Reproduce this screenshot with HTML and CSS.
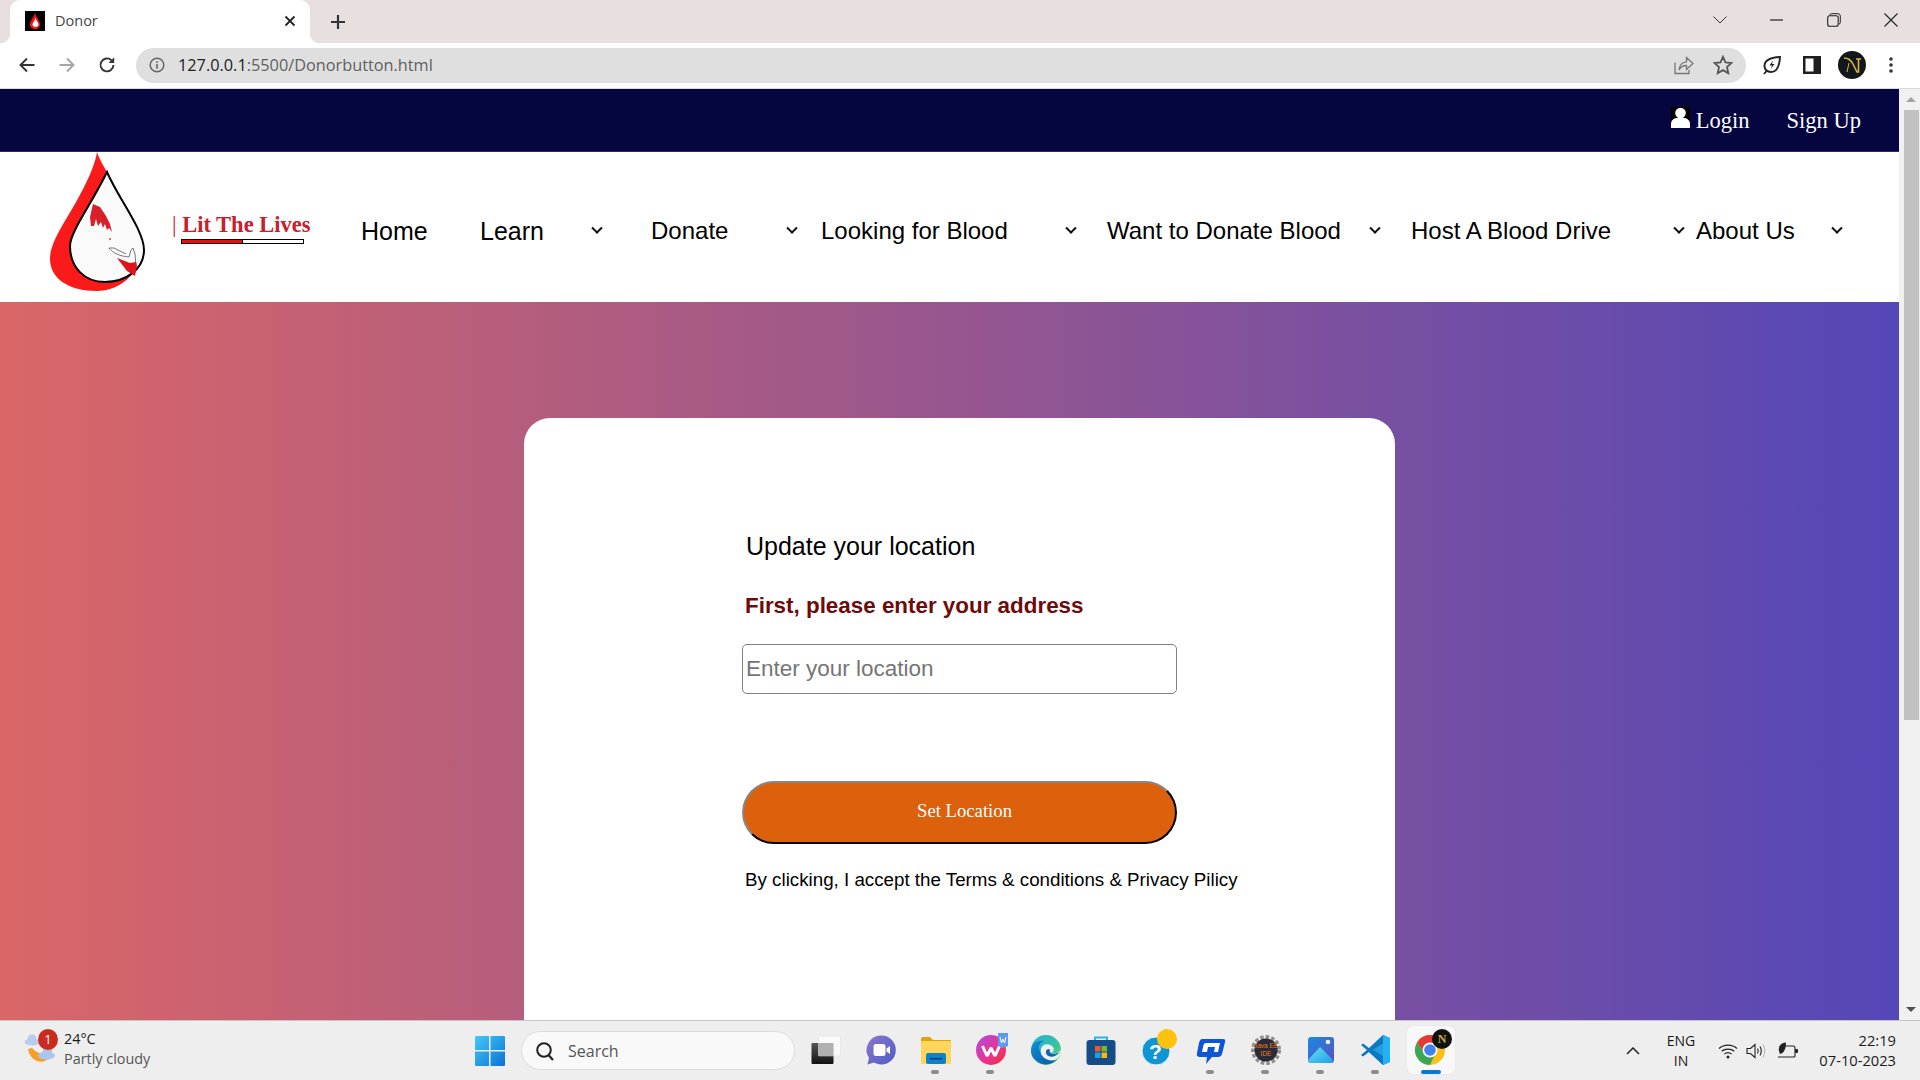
FILE: index.html
```html
<!DOCTYPE html>
<html lang="en">
<head>
<meta charset="utf-8">
<title>Donor</title>
<link rel="stylesheet" href="styles.css">
</head>
<body>
<div class="tabstrip">
  <div class="tab">
    <svg class="favicon" viewBox="0 0 20 20"><rect width="20" height="20" fill="#000"/><path d="M10 2C9 6 5 10 5 13.500C5 16.500 7.500 18 10 18C13 18 15 16 15 13.500C15 10 11 6 10 2Z" fill="#f11"/><path d="M10.500 7C10 10 7.500 11.500 7.500 13.500C7.500 15 9 16 10.500 16C12.500 16 13.500 15 13.500 13.500C13.500 11.500 11.500 10 10.500 7Z" fill="#fff"/></svg>
    <span class="tab-title">Donor</span>
    <svg class="tab-close" viewBox="0 0 12 12"><path d="M1.500 1.500L10.500 10.500M10.500 1.500L1.500 10.500" stroke="#222" stroke-width="1.800"/></svg>
  </div>
  <svg class="newtab" viewBox="0 0 16 16"><path d="M8 1V15M1 8H15" stroke="#333" stroke-width="2.200"/></svg>
  <div class="win-controls">
    <svg class="wc wc-chev" viewBox="0 0 14 8"><path d="M.5 .5L7 7L13.500 .5" fill="none" stroke="#333" stroke-width="1"/></svg>
    <svg class="wc wc-min" viewBox="0 0 14 14"><path d="M0 7H13" stroke="#222" stroke-width="1.200"/></svg>
    <svg class="wc wc-max" viewBox="0 0 14 14"><path d="M3 2.500V2Q3 .7 4.500 .7H11Q13.300 .7 13.300 3V9.500Q13.300 11 12 11" fill="none" stroke="#222"/><rect x=".7" y="2.700" width="10.500" height="10.500" rx="2" fill="none" stroke="#222" stroke-width="1.100"/></svg>
    <svg class="wc wc-close" viewBox="0 0 14 14"><path d="M.5 .5L13.500 13.500M13.500 .5L.5 13.500" stroke="#222" stroke-width="1.100"/></svg>
  </div>
</div>

<div class="toolbar">
  <svg class="tb-ico" viewBox="0 0 18 18"><path d="M16.500 9H2.500M9 2.500L2.500 9L9 15.500" fill="none" stroke="#333" stroke-width="1.900"/></svg>
  <svg class="tb-ico" viewBox="0 0 18 18"><path d="M1.500 9H15.500M9 2.500L15.500 9L9 15.500" fill="none" stroke="#a5a5a5" stroke-width="1.900"/></svg>
  <svg class="tb-ico" viewBox="0 0 18 18"><path d="M15.500 9A6.500 6.500 0 1 1 13.500 4.200" fill="none" stroke="#333" stroke-width="1.900"/><path d="M16.200 1.200V7H10.500Z" fill="#333"/></svg>
  <div class="omnibox">
    <svg class="info" viewBox="0 0 16 16"><circle cx="8" cy="8" r="6.800" fill="none" stroke="#666" stroke-width="1.500"/><rect x="7.200" y="7" width="1.600" height="4.800" fill="#666"/><rect x="7.200" y="4.200" width="1.600" height="1.700" fill="#666"/></svg>
    <span class="url"><span class="url-host">127.0.0.1</span>:5500/Donorbutton.html</span>
    <svg class="omni-ico" viewBox="0 0 20 20"><path d="M1 7.500V18.500H15V15" fill="none" stroke="#777" stroke-width="1.300"/><path d="M5 15C5.500 10 8.500 7 12.500 6.800V2.500L19 8.500L12.500 14.500V10.500C9.500 10.300 7 11.500 5 15Z" fill="none" stroke="#777" stroke-width="1.300"/></svg>
    <svg class="omni-ico star" viewBox="0 0 20 20"><path d="M10 1.800L12.500 7.400L18.500 8L14 12.100L15.300 18.200L10 15.100L4.700 18.200L6 12.100L1.500 8L7.500 7.400Z" fill="none" stroke="#555" stroke-width="1.800"/></svg>
  </div>
  <svg class="ext leaf" viewBox="0 0 20 20"><path d="M18 2C17.500 10 16 17 9 17C5 17 2.500 14.500 2.500 11C2.500 6 8 2.500 18 2Z" fill="none" stroke="#222" stroke-width="1.900"/><path d="M2 19L5 15.500" stroke="#222" stroke-width="1.900"/><path d="M11 5.500L7.500 10.500H10L8.500 14L12.500 9H10Z" fill="#222"/></svg>
  <svg class="ext side" viewBox="0 0 18 18"><rect width="18" height="18" fill="#1f1f1f"/><rect x="2.500" y="2.500" width="8" height="13" fill="#fff"/></svg>
  <svg class="ext avatar" viewBox="0 0 28 28"><circle cx="14" cy="14" r="14" fill="#12171c"/><path d="M6 7C11 7 13 9 15 13L19 21H20.500V8M18 8H23" fill="none" stroke="#d8b53c" stroke-width="1.600"/><path d="M9 21L11 12" stroke="#d8b53c"/></svg>
  <svg class="ext dots" viewBox="0 0 4 18"><circle cx="2" cy="3" r="1.800" fill="#333"/><circle cx="2" cy="9" r="1.800" fill="#333"/><circle cx="2" cy="15" r="1.800" fill="#333"/></svg>
</div>

<div class="viewport">
  <main class="page">
    <header class="topbar">
      <a class="top-link login">
        <svg class="user" viewBox="0 0 19 21"><rect width="19" height="21" fill="#000"/><circle cx="9.500" cy="6" r="5.300" fill="#fff"/><path d="M0 21V17C0 12.500 4 10.500 9.500 10.500C15 10.500 19 12.500 19 17V21Z" fill="#fff"/></svg>
        <span>Login</span>
      </a>
      <a class="top-link signup">Sign Up</a>
    </header>

    <nav class="navbar">
      <div class="brand">
        <svg class="drop" viewBox="45 150 105 145">
          <path d="M97 152C94 172 76 203 62 226C54 240 50 250 50 259C50 278 68 291 97 291C120 291 137 274 144 254L108 174C103 165 99 158 97 152Z" fill="#fb1a1a"/>
          <path d="M107 172C118 198 144 230 144 250C144 269 126 282 105 282C84 282 70 267 70 246C70 232 91 205 107 172Z" fill="#fafafa" stroke="#000" stroke-width="2"/>
          <path d="M93 204L100 207L106 216L110 224L112 232L109 228L107 230L105 224L103 228L101 222L98 226L96 219L94 226L91 226L90 217Z" fill="#d8202a"/>
          <circle cx="110" cy="239" r="1" fill="#f33"/>
          <path d="M109 248C113 253 119 256 129 257L131 250L133 248L135 254L136 266M109 248L114 248L126 254" fill="none" stroke="#555" stroke-width=".8"/>
          <path d="M117 258L130 263L136 262L137 266L135 276L127 271Z" fill="#e0141c"/>
        </svg>
        <div class="brand-text">
          <div class="brand-name"><span class="brand-pipe">|</span> Lit The Lives</div>
          <div class="brand-bar"><span class="brand-fill"></span></div>
        </div>
      </div>
      <ul class="menu">
        <li class="menu-item w-home"><span>Home</span></li>
        <li class="menu-item w-learn"><span>Learn</span><i class="chev"></i></li>
        <li class="menu-item w-donate"><span>Donate</span><i class="chev"></i></li>
        <li class="menu-item w-looking"><span>Looking for Blood</span><i class="chev"></i></li>
        <li class="menu-item w-want"><span>Want to Donate Blood</span><i class="chev"></i></li>
        <li class="menu-item w-host"><span>Host A Blood Drive</span><i class="chev"></i></li>
        <li class="menu-item w-about"><span>About Us</span><i class="chev"></i></li>
      </ul>
    </nav>

    <section class="hero">
      <div class="card">
        <h2 class="card-title">Update your location</h2>
        <p class="card-sub">First, please enter your address</p>
        <input class="loc-input" type="text" placeholder="Enter your location">
        <button class="set-btn" type="button">Set Location</button>
        <p class="terms">By clicking, I accept the Terms &amp; conditions &amp; Privacy Pilicy</p>
      </div>
    </section>
  </main>
  <aside class="scrollbar">
    <span class="arrow-up"></span>
    <span class="thumb"></span>
    <span class="arrow-down"></span>
  </aside>
</div>

<footer class="taskbar">
  <div class="weather">
    <div class="weather-icon">
      <svg viewBox="0 0 34 34" class="weather-svg"><circle cx="8" cy="5" r="4.500" fill="#b6cdf0"/><ellipse cx="8" cy="8" rx="7.500" ry="3.500" fill="#b6cdf0"/><path d="M4 15C5 24 14 30 21 27C25 25 28 21 28 13C23 20 15 22 8 14Z" fill="#f5a029"/><circle cx="23" cy="18" r="4.500" fill="#a9c6ee"/><ellipse cx="22.500" cy="21.500" rx="8.500" ry="4" fill="#a9c6ee"/></svg>
      <span class="badge">1</span>
    </div>
    <div class="weather-text">
      <div class="temp">24°C</div>
      <div class="cond">Partly cloudy</div>
    </div>
  </div>

  <svg class="start" viewBox="0 0 30 30"><defs><linearGradient id="winA" x1="0" y1="0" x2="1" y2="1"><stop offset="0" stop-color="#45c8f8"/><stop offset="1" stop-color="#0a72d4"/></linearGradient></defs><path d="M0 1Q0 0 1 0H14V14H0ZM15.500 0H29Q30 0 30 1V14H15.500ZM0 15.500H14V30H1Q0 30 0 29ZM15.500 15.500H30V29Q30 30 29 30H15.500Z" fill="url(#winA)"/></svg>

  <div class="search">
    <svg class="search-ico" viewBox="0 0 20 20"><circle cx="9" cy="9" r="6.800" fill="none" stroke="#222" stroke-width="2"/><path d="M13.500 14L18 19" stroke="#222" stroke-width="2.200"/></svg>
    <span>Search</span>
  </div>

  <div class="apps">
    <div class="app"><svg class="app-ico" viewBox="0 0 32 32"><defs><linearGradient id="tvG" x1="0" y1="0" x2="0" y2="1"><stop offset="0" stop-color="#555"/><stop offset="1" stop-color="#111"/></linearGradient></defs><rect x="1.500" y="9" width="22" height="21" rx="1" fill="url(#tvG)"/><rect x="8.500" y="2" width="22" height="20" rx="1" fill="#fafafa" fill-opacity=".9" stroke="#ddd" stroke-width=".5"/><rect x="8.500" y="9" width="15" height="13" fill="#b0b0b0"/></svg></div>
    <div class="app"><svg class="app-ico" viewBox="0 0 32 32"><defs><linearGradient id="chatG" x1="0" y1="0" x2="1" y2="1"><stop offset="0" stop-color="#8b77c8"/><stop offset="1" stop-color="#4e5cc8"/></linearGradient></defs><path d="M16 1.500A14.500 14.500 0 1 1 9 28.500L2.500 30.500L4 24A14.500 14.500 0 0 1 16 1.500Z" fill="url(#chatG)"/><rect x="8.500" y="10" width="12" height="12" rx="2.500" fill="#fff"/><path d="M21.500 14.500L25 12V20L21.500 17.500Z" fill="#fff"/></svg></div>
    <div class="app dot"><svg class="app-ico" viewBox="0 0 32 32"><path d="M1 5Q1 3 3 3H10L13 6H30Q31 6 31 7V10H1Z" fill="#dea40c"/><rect x="1" y="7" width="30" height="23" rx="1" fill="#ffd65c"/><rect x="6" y="19" width="20" height="11" rx="2" fill="#0f7fc8"/><rect x="10" y="24" width="12" height="1.500" fill="#063e72"/></svg></div>
    <div class="app dot"><svg class="app-ico" viewBox="0 0 32 32"><defs><linearGradient id="wpsG" x1="0" y1="0" x2="1" y2="1"><stop offset="0" stop-color="#a94ee6"/><stop offset=".6" stop-color="#f0308a"/><stop offset="1" stop-color="#f0302e"/></linearGradient></defs><circle cx="16" cy="16" r="15" fill="url(#wpsG)"/><path d="M7.500 12L12 22L16 14L20 22L24.500 12" fill="none" stroke="#fff" stroke-width="3" stroke-linejoin="bevel"/><path d="M23 -1H33V12L28 14L23 12Z" fill="#5d9bf0"/><path d="M25 3L26.500 9L28 5L29.500 9L31 3" fill="none" stroke="#fff" stroke-width="1"/></svg></div>
    <div class="app"><svg class="app-ico" viewBox="0 0 32 32"><defs><linearGradient id="edgeA" x1="0" y1="0" x2="1" y2="1"><stop offset="0" stop-color="#2da9d8"/><stop offset=".6" stop-color="#35c5a0"/><stop offset="1" stop-color="#6fdc4e"/></linearGradient><linearGradient id="edgeB" x1="0" y1="0" x2="1" y2="1"><stop offset="0" stop-color="#0f8fd8"/><stop offset="1" stop-color="#0b57a4"/></linearGradient></defs><circle cx="16" cy="16" r="15" fill="url(#edgeA)"/><path d="M1 16C2 9 8 6 14 7C9 9 8 13 10 17C12 24 20 28 27 25C22 31 14 32 8 28C3 25 1 21 1 16Z" fill="url(#edgeB)"/><path d="M11 15C12 10 18 9 22 12C25 14 24 19 20 19C23 21 29 19 31 16C31 20 29 24 25 26C18 28 9 23 11 15Z" fill="#f0f0f0"/><path d="M19 15C16 15 15 18 17 21C20 24 26 23 30 18C27 20 21 21 20 18C19 17 21 16 19 15Z" fill="#0c64b4"/></svg></div>
    <div class="app"><svg class="app-ico" viewBox="0 0 32 32"><path d="M10 8V3.500H22V8" fill="none" stroke="#2ab4ea" stroke-width="2"/><rect x="1.500" y="6" width="29" height="25" rx="3" fill="#164d86"/><rect x="10" y="12" width="5.500" height="5.500" fill="#ec5a2a"/><rect x="16.500" y="12" width="5.500" height="5.500" fill="#7ab82a"/><rect x="10" y="18.500" width="5.500" height="5.500" fill="#18a0e8"/><rect x="16.500" y="18.500" width="5.500" height="5.500" fill="#fcb810"/></svg></div>
    <div class="app"><svg class="app-ico" viewBox="0 0 32 32"><circle cx="16" cy="17" r="14" fill="#0f95d4" stroke="#e8f4fb"/><text class="help-q" x="15.500" y="25">?</text><circle cx="27" cy="5" r="10" fill="#fdc10e"/></svg></div>
    <div class="app dot"><svg class="app-ico" viewBox="0 0 32 32"><path d="M7 5H28Q31 5 30 8L27 20Q26 23 23 23H17L11 30L12 23H5Q1 23 2 19L4 9Q5 5 7 5Z" fill="#0d56d6"/><path d="M11 9H25L23 18H19L20 13H13L12 18H7L8.500 11Q9 9 11 9Z" fill="#fff"/><path d="M14 15H17L15 24H12Z" fill="#0d56d6"/></svg></div>
    <div class="app dot"><svg class="app-ico" viewBox="0 0 32 32"><circle cx="16" cy="16" r="13" fill="none" stroke="#8f8f8f" stroke-width="4" stroke-dasharray="3.500 2"/><circle cx="16" cy="16" r="11.500" fill="#2d2a38"/><text class="java-t" x="16" y="14">Java EE</text><text class="java-t" x="16" y="22">IDE</text></svg></div>
    <div class="app dot"><svg class="app-ico" viewBox="0 0 32 32"><defs><linearGradient id="phG" x1="0" y1="0" x2="1" y2="1"><stop offset="0" stop-color="#1a8ae0"/><stop offset="1" stop-color="#5a50c0"/></linearGradient><linearGradient id="phM" x1="0" y1="0" x2="1" y2="1"><stop offset="0" stop-color="#6fe0f5"/><stop offset="1" stop-color="#1aa0e8"/></linearGradient></defs><rect x="3" y="3" width="26" height="26" rx="3" fill="url(#phG)"/><circle cx="23" cy="8" r="2.300" fill="#e8f2fb"/><path d="M3 26L15 13L27 25Q29 29 26 29H6Q3 29 3 26Z" fill="url(#phM)"/></svg></div>
    <div class="app dot"><svg class="app-ico" viewBox="0 0 32 32"><path d="M23 1L30 4V28L23 31L9 18L23 10Z" fill="#1f9fe0"/><path d="M23 1V31L30 28V4Z" fill="#25b2f2"/><path d="M23 1L9 14L3 9.500L1 11L7 16L1 21L3 22.500L9 18L23 31V22L13 16L23 10Z" fill="#0a78c4"/></svg></div>
    <div class="app app-active"><svg class="app-ico" viewBox="0 0 32 32"><circle cx="15" cy="16" r="15" fill="#fbc116"/><path d="M28 8.500A15 15 0 0 0 2 8.500L9.400 19.250A6.500 6.500 0 0 1 15 9.500Z" fill="#e53935"/><path d="M2 8.500A15 15 0 0 0 15 31L20.600 19.250L9.400 19.250Z" fill="#3aa757"/><circle cx="15" cy="16" r="7.500" fill="#fff"/><circle cx="15" cy="16" r="5.800" fill="#3f83ee"/><circle cx="27" cy="5" r="10" fill="#111"/><text class="avatar-n" x="27" y="9">N</text></svg></div>
  </div>

  <div class="tray">
    <svg class="tray-chev" viewBox="0 0 14 8"><path d="M1 7L7 1L13 7" fill="none" stroke="#222" stroke-width="1.500"/></svg>
    <div class="lang"><div>ENG</div><div>IN</div></div>
    <svg class="wifi" viewBox="0 0 20 16"><path d="M1 5.500C6 1 14 1 19 5.500M3.700 8.300C7 5.300 13 5.300 16.300 8.300M6.400 11C8.500 9.300 11.500 9.300 13.600 11" fill="none" stroke="#222" stroke-width="1.200"/><circle cx="10" cy="14" r="1.500" fill="#222"/></svg>
    <svg class="speaker" viewBox="0 0 20 16"><path d="M1 5.500H4.500L9 1.500V14.500L4.500 10.500H1Z" fill="none" stroke="#222" stroke-width="1.100"/><path d="M11.500 5.500Q13 8 11.500 10.500M14 3.500Q16.500 8 14 12.500" fill="none" stroke="#222" stroke-width="1.100"/><path d="M17 1.500Q20.500 8 17 14.500" fill="none" stroke="#bbb" stroke-width="1.100"/></svg>
    <svg class="battery" viewBox="0 0 22 18"><path d="M8 4H16Q18 4 18 6V14Q18 15 17 15H1" fill="none" stroke="#222" stroke-width="1.100"/><rect x="18" y="7" width="3" height="4" rx="1" fill="#222"/><path d="M9 .5C4 1 1 4 2 9L3 12C7 11 9 7 9 .5Z" fill="#222"/></svg>
    <div class="clock"><div>22:19</div><div>07-10-2023</div></div>
  </div>
</footer>
</body>
</html>
```

FILE: styles.css
```css
* { box-sizing: border-box; }
html, body { margin: 0; padding: 0; height: 100%; }
body {
  width: 1920px;
  height: 1080px;
  overflow: hidden;
  display: flex;
  flex-direction: column;
  font-family: "Liberation Sans", Arial, sans-serif;
  background: #fff;
}

/* browser tab strip */
.tabstrip {
  height: 43px;
  flex: none;
  background: #e8dfdf;
  display: flex;
  align-items: flex-end;
}
.tab {
  position: relative;
  margin-left: 10px;
  width: 300px;
  height: 43px;
  background: #fff;
  border-radius: 10px 10px 0 0;
  display: flex;
  align-items: center;
  padding: 0 13px 2px 15px;
}
.tab::before, .tab::after {
  content: "";
  position: absolute;
  bottom: 0;
  width: 10px;
  height: 10px;
}
.tab::before { left: -10px; background: radial-gradient(circle at 0 0, transparent 10px, #fff 10.5px); }
.tab::after { right: -10px; background: radial-gradient(circle at 100% 0, transparent 10px, #fff 10.5px); }
.favicon { width: 20px; height: 20px; flex: none; }
.tab-title {
  font: 14.500px "Open Sans", sans-serif;
  color: #444;
  margin-left: 10px;
  flex: 1;
}
.tab-close { width: 12px; height: 12px; margin-right: 1px; }
.newtab { width: 16px; height: 16px; margin: 0 0 13px 20px; }
.win-controls {
  margin-left: auto;
  align-self: stretch;
  display: flex;
  align-items: center;
  padding: 0 22px 4px 0;
}
.wc { width: 14px; height: 14px; margin-left: 43px; }
.wc-chev { height: 8px; }

/* browser toolbar */
.toolbar {
  height: 46px;
  flex: none;
  background: #fff;
  border-bottom: 1px solid #d8d8d8;
  display: flex;
  align-items: center;
  padding: 0 0 1px 18px;
}
.tb-ico { width: 18px; height: 18px; margin-right: 22px; flex: none; }
.omnibox {
  height: 35px;
  width: 1610px;
  margin-left: -2px;
  background: #dfdfdf;
  border-radius: 18px;
  display: flex;
  align-items: center;
  padding: 0 13px;
}
.info { width: 16px; height: 16px; flex: none; }
.url {
  font: 16.300px "Open Sans", sans-serif;
  color: #5f5f5f;
  margin-left: 13px;
  flex: 1;
}
.url-host { color: #222; }
.omni-ico { width: 20px; height: 20px; margin-left: 20px; flex: none; }
.star { margin-left: 19px; }
.ext { flex: none; }
.leaf { width: 20px; height: 20px; margin-left: 16px; }
.side { width: 18px; height: 18px; margin-left: 21px; }
.avatar { width: 28px; height: 28px; margin-left: 17px; }
.dots { width: 4px; height: 18px; margin-left: 23px; }

/* viewport */
.viewport { flex: 1; display: flex; min-height: 0; }
.page { flex: 1; display: flex; flex-direction: column; min-width: 0; }

.topbar {
  height: 63px;
  flex: none;
  background: #05053f;
  border-bottom: 1px solid #2a2a5c;
  display: flex;
  align-items: center;
  justify-content: flex-end;
  padding: 1px 38px 0 0;
}
.top-link {
  font: 22.500px "Liberation Serif", serif;
  color: #fff;
  display: flex;
  align-items: center;
}
.login { margin-right: 37px; }
.user { width: 19px; height: 21px; margin-right: 6px; margin-top: -6px; }

.navbar {
  height: 150px;
  flex: none;
  background: #fff;
  display: flex;
  align-items: flex-start;
}
.brand { width: 361px; display: flex; flex: none; padding-left: 45px; }
.drop { width: 105px; height: 145px; flex: none; margin-top: -2px; overflow: visible; }
.brand-text { margin: 58px 0 0 22px; }
.brand-name {
  font: bold 22.500px/30px "Liberation Serif", serif;
  color: #c8202a;
  white-space: nowrap;
}
.brand-pipe { font-weight: normal; }
.brand-bar {
  width: 123px;
  height: 5px;
  margin: -1px 0 0 9px;
  border: 1px solid #000;
  background: #fff;
  display: flex;
}
.brand-fill { width: 50%; background: #f00c0c; border-right: 1px solid #000; }

.menu {
  list-style: none;
  margin: 62px 0 0;
  padding: 0;
  display: flex;
  font-size: 24px;
  line-height: 32px;
  color: #000;
}
.menu-item { display: flex; align-items: center; justify-content: space-between; flex: none; white-space: nowrap; }
.w-home { width: 119px; font-size: 25px; }
.w-learn { width: 171px; padding-right: 50px; font-size: 25px; padding-top: 1px; }
.w-donate { width: 170px; padding-right: 25px; }
.w-looking { width: 286px; padding-right: 32px; }
.w-want { width: 304px; padding-right: 32px; }
.w-host { width: 285px; padding-right: 13px; }
.w-about { width: 150px; padding-right: 5px; }
.chev {
  display: block;
  width: 8px;
  height: 8px;
  border-right: 2px solid #111;
  border-bottom: 2px solid #111;
  transform: rotate(45deg) translate(-2px, -2px);
}

.hero {
  flex: 1;
  min-height: 0;
  overflow: hidden;
  background: linear-gradient(90deg, #da6667, #5447b7);
  padding: 116px 0 0 524px;
}
.card {
  width: 871px;
  height: 800px;
  background: #fff;
  border-radius: 26px;
  padding: 113px 0 0 218px;
}
.card-title {
  margin: 0 0 30px 4px;
  font-size: 25px;
  font-weight: normal;
  line-height: 30px;
  color: #000;
}
.card-sub {
  margin: 0 0 23px 3px;
  font-size: 22.400px;
  font-weight: bold;
  line-height: 30px;
  color: #6f0a0a;
}
.loc-input {
  display: block;
  width: 435px;
  height: 50px;
  border: 1.500px solid #808080;
  border-radius: 5px;
  padding: 0 3px;
  font: 22.500px "Liberation Sans", sans-serif;
  color: #000;
  background: #fff;
  margin-bottom: 87px;
}
.loc-input::placeholder { color: #757575; opacity: 1; }
.set-btn {
  display: block;
  width: 435px;
  height: 63px;
  border: 2px outset #333;
  border-radius: 32px;
  background: #dd600c;
  color: #fff;
  font: 18.700px "Liberation Serif", serif;
  padding: 0 0 3px 10px;
  margin-bottom: 24px;
}
.terms {
  margin: 0 0 0 3px;
  font-size: 18.750px;
  line-height: 24px;
  color: #000;
}

/* scrollbar */
.scrollbar {
  width: 21px;
  flex: none;
  background: #f1f1f1;
  display: flex;
  flex-direction: column;
  align-items: center;
  padding: 8px 0 8px 3px;
}
.arrow-up { width: 0; height: 0; border: 5px solid transparent; border-top: 0; border-bottom: 5px solid #a3a3a3; }
.arrow-down { width: 0; height: 0; border: 5px solid transparent; border-bottom: 0; border-top: 5px solid #505050; margin-top: auto; }
.thumb { width: 15px; height: 610px; background: #c1c1c1; margin-top: 8px; }

/* taskbar */
.taskbar {
  height: 60px;
  flex: none;
  background: #eeeeee;
  border-top: 1px solid #c6c6c6;
  display: flex;
  align-items: flex-start;
  font-family: "Open Sans", sans-serif;
  color: #1a1a1a;
}
.weather { width: 475px; flex: none; display: flex; padding: 8px 0 0 24px; }
.weather-icon { position: relative; width: 34px; height: 38px; }
.weather-svg { width: 34px; height: 34px; margin-top: 5px; display: block; }
.badge {
  position: absolute;
  left: 14px;
  top: 0;
  width: 20px;
  height: 21px;
  border-radius: 50%;
  background: #c92b1e;
  color: #fff;
  font-size: 13px;
  line-height: 21px;
  text-align: center;
}
.weather-text { margin-left: 6px; font-size: 14.400px; line-height: 20px; }
.cond { color: #555; }
.start { width: 30px; height: 30px; margin-top: 15px; flex: none; }
.search {
  width: 274px;
  height: 39px;
  margin: 10px 3px 0 16px;
  border: 1px solid #dcdcdc;
  border-radius: 20px;
  background: #f9f9f9;
  display: flex;
  align-items: center;
  padding-left: 13px;
  font-size: 16px;
  color: #555;
  flex: none;
}
.search-ico { width: 20px; height: 20px; margin-right: 13px; }
.apps { display: flex; flex: none; }
.app {
  position: relative;
  width: 55px;
  height: 59px;
  padding-top: 13px;
  display: flex;
  justify-content: center;
}
.app-ico { width: 32px; height: 32px; display: block; overflow: visible; }
.dot::after {
  content: "";
  position: absolute;
  left: 23px;
  top: 49px;
  width: 8px;
  height: 4px;
  border-radius: 2px;
  background: #8c8c8c;
}
.app-active {
  width: 48px;
  height: 48px;
  margin: 5px 0 0 4px;
  padding-top: 8px;
  background: #f8f8f8;
  border-radius: 6px;
  box-shadow: 0 0 1px #ccc;
}
.app-active::after {
  content: "";
  position: absolute;
  left: 14px;
  top: 44px;
  width: 20px;
  height: 4px;
  border-radius: 2px;
  background: #0a78d4;
}
.help-q { font: bold 21px "Liberation Sans", sans-serif; fill: #fff; text-anchor: middle; }
.java-t { font: 6.500px "Liberation Sans", sans-serif; fill: #f07a10; text-anchor: middle; }
.avatar-n { font: bold 12px "Liberation Serif", serif; fill: #c9a93a; text-anchor: middle; }
.tray { margin-left: auto; display: flex; align-items: center; height: 59px; padding-right: 24px; }
.tray-chev { width: 14px; height: 8px; }
.lang { width: 60px; margin-left: 11px; text-align: center; font-size: 14px; line-height: 20px; }
.wifi { width: 20px; height: 16px; margin-left: 7px; }
.speaker { width: 20px; height: 16px; margin-left: 8px; }
.battery { width: 22px; height: 18px; margin-left: 11px; }
.clock { width: 90px; margin-left: 7px; padding-bottom: 2px; text-align: right; font-size: 14.700px; line-height: 20px; }
```
